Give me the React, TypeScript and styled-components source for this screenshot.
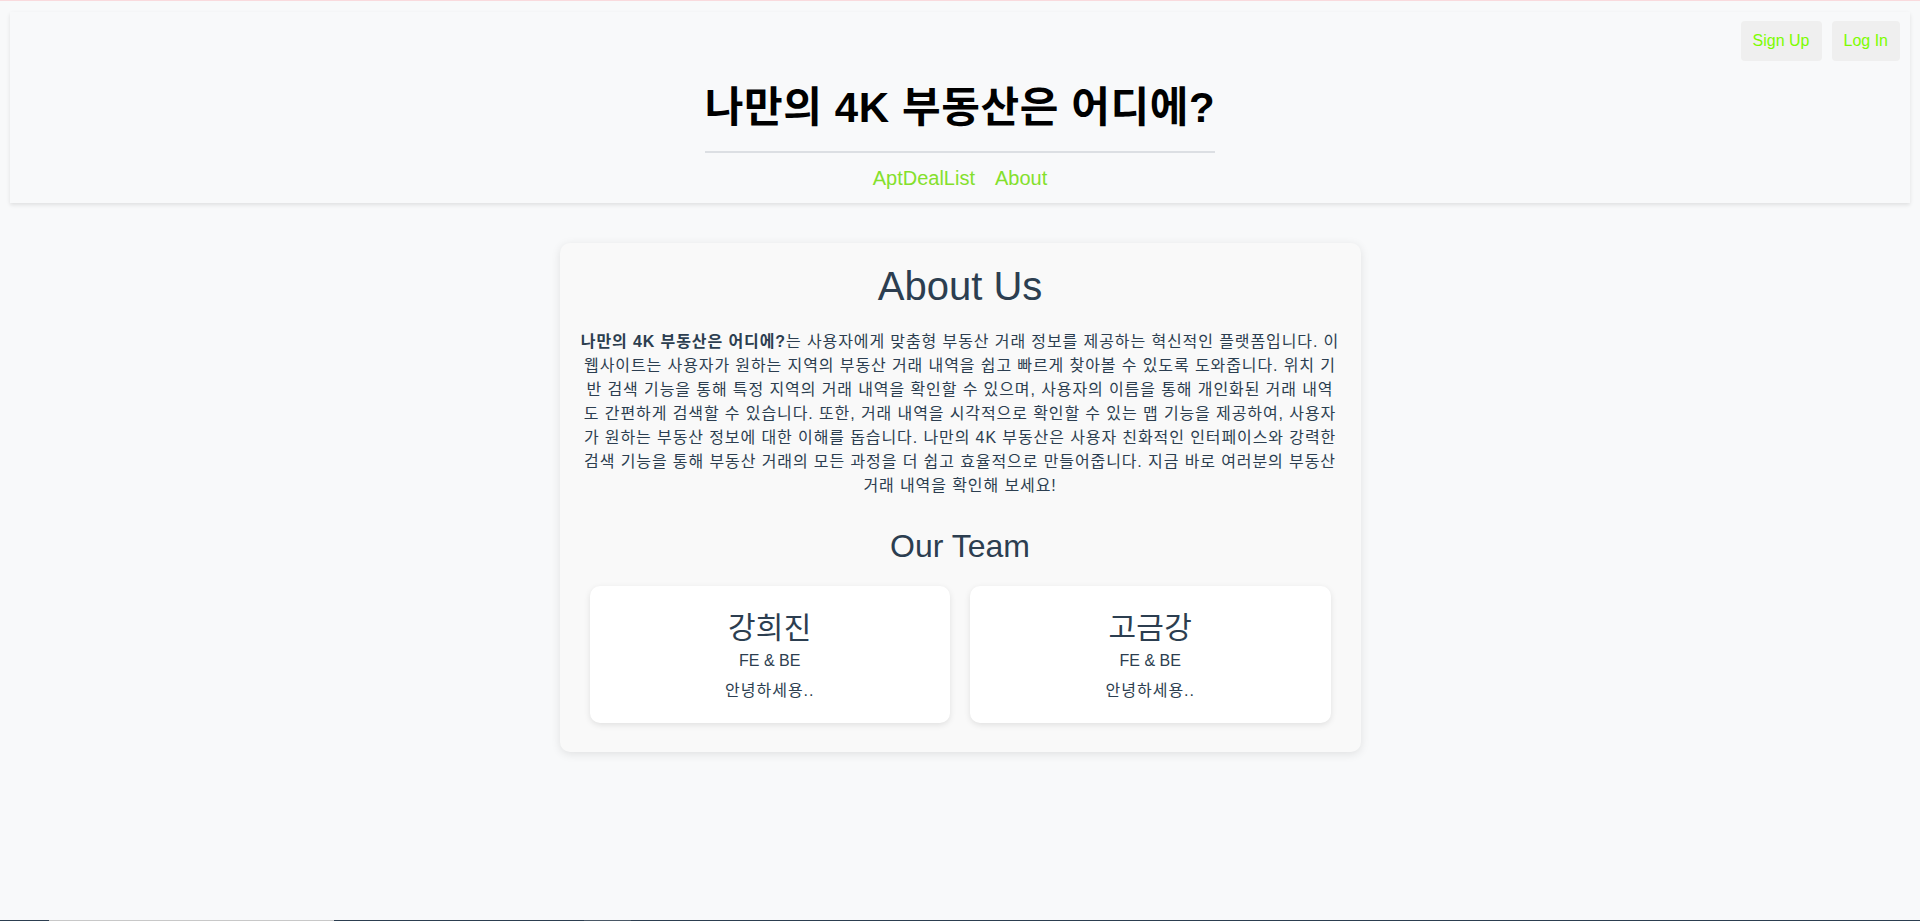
import React from "react";
import styled, { createGlobalStyle } from "styled-components";

const GlobalStyle = createGlobalStyle`
  html, body {
    margin: 0;
    padding: 0;
    background: #f8f9fa;
  }
  body {
    font-family: "Liberation Sans", Arial, "Noto Sans CJK KR", sans-serif;
    color: #2c3e50;
    -webkit-font-smoothing: antialiased;
  }
  * { box-sizing: border-box; }
`;

const TopLine = styled.div`
  height: 1px;
  background: #f9dadd;
`;

const Shell = styled.div`
  padding: 11px 10px 0;
`;

const Header = styled.header`
  background: #f8f9fa;
  box-shadow: 0 2px 4px rgba(0, 0, 0, 0.1);
  padding: 9px 10px 13px;
  display: flex;
  flex-direction: column;
  align-items: center;
  height: 191px;
`;

const AuthRow = styled.div`
  align-self: stretch;
  display: flex;
  justify-content: flex-end;
  gap: 10px;
`;

const AuthButton = styled.button`
  font-family: "Liberation Sans", Arial, sans-serif;
  font-size: 16px;
  line-height: 18px;
  padding: 11px 12px;
  height: 40px;
  border: none;
  border-radius: 4px;
  background: #efefef;
  color: #7cfc00;
  cursor: pointer;
`;

const Title = styled.h1`
  margin: 23px 0 0;
  font-size: 42px;
  line-height: 48px;
  letter-spacing: 0.6px;
  font-weight: 700;
  color: #000;
  padding-bottom: 19px;
  border-bottom: 2px solid #dcdfe3;
  white-space: nowrap;
`;

const Nav = styled.nav`
  margin-top: 13px;
  display: flex;
  gap: 20px;
`;

const NavLink = styled.a`
  font-size: 20px;
  line-height: 24px;
  color: #84e02c;
  text-decoration: none;
`;

const Main = styled.main`
  min-height: 717px;
  padding-top: 40px;
  display: flex;
  justify-content: center;
  align-items: flex-start;
`;

const AboutCard = styled.section`
  width: 801px;
  background: #f9f9f9;
  border-radius: 10px;
  box-shadow: 0 2px 10px rgba(0, 0, 0, 0.1);
  padding: 20px 20px 19px;
  text-align: center;
`;

const AboutTitle = styled.h1`
  margin: 0;
  font-size: 40px;
  line-height: 46px;
  font-weight: 400;
  color: #2c3e50;
`;

const Intro = styled.p`
  margin: 21px 0 0;
  font-size: 16px;
  line-height: 24px;
  letter-spacing: 0.9px;
  white-space: nowrap;
  color: #2c3e50;
`;

const SectionTitle = styled.h2`
  margin: 30px 0 0;
  font-size: 32px;
  line-height: 37px;
  font-weight: 400;
  color: #2c3e50;
`;

const TeamRow = styled.div`
  margin-top: 11px;
  display: flex;
`;

const MemberCard = styled.div`
  flex: 1;
  margin: 10px;
  background: #fff;
  border-radius: 10px;
  box-shadow: 0 2px 6px rgba(0, 0, 0, 0.1);
  padding: 25px 20px 22px;
  display: flex;
  flex-direction: column;
  align-items: center;
`;

const MemberName = styled.h3`
  margin: 0;
  font-size: 30px;
  line-height: 34px;
  letter-spacing: 0.3px;
  font-weight: 400;
  color: #2c3e50;
`;

const MemberText = styled.p<{ $top: number; $ls?: number }>`
  margin: ${(p) => p.$top}px 0 0;
  font-size: 16px;
  line-height: 20px;
  letter-spacing: ${(p) => p.$ls ?? 0}px;
  color: #2c3e50;
`;

const Footer = styled.footer`
  background: #2c3e50;
  height: 40px;
  display: flex;
  align-items: flex-start;
  padding-left: 49px;
`;

const FooterBlock = styled.div<{ $w: number; $ml: number; $c: string }>`
  width: ${(p) => p.$w}px;
  margin-left: ${(p) => p.$ml}px;
  height: 1px;
  background: ${(p) => p.$c};
`;

const members = [
  { name: "강희진", role: "FE & BE", msg: "안녕하세용.." },
  { name: "고금강", role: "FE & BE", msg: "안녕하세용.." },
];

const introLines = [
  "웹사이트는 사용자가 원하는 지역의 부동산 거래 내역을 쉽고 빠르게 찾아볼 수 있도록 도와줍니다. 위치 기",
  "반 검색 기능을 통해 특정 지역의 거래 내역을 확인할 수 있으며, 사용자의 이름을 통해 개인화된 거래 내역",
  "도 간편하게 검색할 수 있습니다. 또한, 거래 내역을 시각적으로 확인할 수 있는 맵 기능을 제공하여, 사용자",
  "가 원하는 부동산 정보에 대한 이해를 돕습니다. 나만의 4K 부동산은 사용자 친화적인 인터페이스와 강력한",
  "검색 기능을 통해 부동산 거래의 모든 과정을 더 쉽고 효율적으로 만들어줍니다. 지금 바로 여러분의 부동산",
  "거래 내역을 확인해 보세요!",
];

export default function App() {
  return (
    <>
      <GlobalStyle />
      <TopLine />
      <Shell>
        <Header>
          <AuthRow>
            <AuthButton>Sign Up</AuthButton>
            <AuthButton>Log In</AuthButton>
          </AuthRow>
          <Title>나만의 4K 부동산은 어디에?</Title>
          <Nav>
            <NavLink href="#">AptDealList</NavLink>
            <NavLink href="#">About</NavLink>
          </Nav>
        </Header>
      </Shell>
      <Main>
        <AboutCard>
          <AboutTitle>About Us</AboutTitle>
          <Intro>
            <strong>나만의 4K 부동산은 어디에?</strong>는 사용자에게 맞춤형 부동산 거래 정보를
            제공하는 혁신적인 플랫폼입니다. 이
            {introLines.map((line) => (
              <React.Fragment key={line}>
                <br />
                {line}
              </React.Fragment>
            ))}
          </Intro>
          <SectionTitle>Our Team</SectionTitle>
          <TeamRow>
            {members.map((m) => (
              <MemberCard key={m.name}>
                <MemberName>{m.name}</MemberName>
                <MemberText $top={6}>{m.role}</MemberText>
                <MemberText $top={10} $ls={1}>
                  {m.msg}
                </MemberText>
              </MemberCard>
            ))}
          </TeamRow>
        </AboutCard>
      </Main>
      <Footer>
        <FooterBlock $w={285} $ml={0} $c="#c8c8c8" />
        <FooterBlock $w={47} $ml={250} $c="#4a5866" />
      </Footer>
    </>
  );
}
